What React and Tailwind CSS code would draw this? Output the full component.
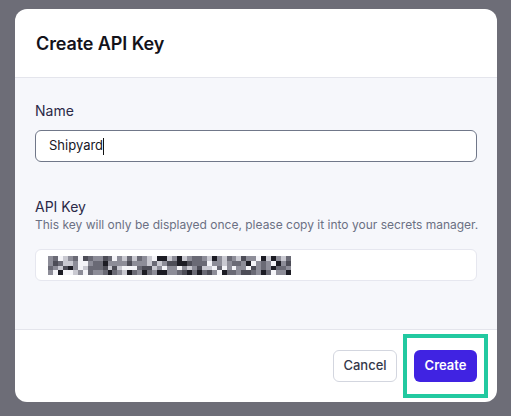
const KEY_COLS = 49;
const KEY_ROWS = 4;
const SHADES = ["#f4f4f8", "#c9c9d1", "#8d8d98", "#6a6a75", "#4d4d57", "#1c1c24"];

// pseudo-random pixel pattern standing in for the redacted key
const keyCells = () => {
  const cells = [];
  let seed = 7;
  for (let r = 0; r < KEY_ROWS; r++) {
    for (let c = 0; c < KEY_COLS; c++) {
      seed = (seed * 9301 + 49297) % 233280;
      const v = seed / 233280;
      const idx = v < 0.12 ? 0 : v < 0.25 ? 1 : v < 0.5 ? 2 : v < 0.75 ? 3 : v < 0.88 ? 4 : 5;
      cells.push({ r, c, fill: SHADES[idx] });
    }
  }
  return cells;
};

const RedactedKey = () => (
  <svg width="243" height="19" viewBox="0 0 243 19" shapeRendering="crispEdges">
    {keyCells().map((cell) => (
      <rect
        key={`${cell.r}-${cell.c}`}
        x={cell.c * 4.96}
        y={cell.r * 4.75}
        width="5"
        height="4.8"
        fill={cell.fill}
      />
    ))}
  </svg>
);

const App = () => {
  return (
    <div
      className="min-h-screen w-full bg-[#6d6d77] pt-[9px] pl-[15px]"
      style={{ fontFamily: "Inter, 'Liberation Sans', sans-serif" }}
    >
      <div className="w-[482px] rounded-xl overflow-hidden bg-white">
        <div className="h-[69px] flex items-center px-[21px] border-b border-[#e4e5ec]">
          <h2 className="text-[18px] font-semibold text-[#13121a] tracking-[-0.1px]">
            Create API Key
          </h2>
        </div>

        <div className="bg-[#f6f7fb] px-[20px] pt-[23px] pb-[48px] border-b border-[#e4e5ec]">
          <label className="block text-[14px] leading-[20px] font-normal text-[#2b2947]">
            Name
          </label>
          <div className="mt-[9px] h-[32px] rounded-md border border-[#707789] bg-white flex items-center pl-[13px]">
            <span className="text-[13px] text-[#17161f]">Shipyard</span>
            <span className="w-px h-[17px] bg-[#111]" />
          </div>

          <label className="block mt-[35px] text-[14px] leading-[20px] font-normal text-[#2b2947]">
            API Key
          </label>
          <p className="text-[12px] leading-[16px] text-[#6b7083] whitespace-nowrap">
            This key will only be displayed once, please copy it into your secrets manager.
          </p>
          <div className="mt-[16px] h-[32px] rounded-md border border-[#e6e7ef] bg-white flex items-center pl-[12px]">
            <RedactedKey />
          </div>
        </div>

        <div className="h-[72px] flex items-center justify-end gap-[17px] pr-[20px]">
          <button className="h-[32px] w-[64px] rounded-md border border-[#d3d6df] bg-white text-[13px] font-medium text-[#34384a]">
            Cancel
          </button>
          <div className="relative">
            <span className="absolute -left-[11px] -right-[11px] -top-[16px] -bottom-[16px] border-4 border-[#22c9a0] pointer-events-none" />
            <button className="h-[32px] w-[63px] rounded-md bg-[#4023e2] text-[13px] font-semibold text-white">
              Create
            </button>
          </div>
        </div>
      </div>
    </div>
  );
};

export default App;
